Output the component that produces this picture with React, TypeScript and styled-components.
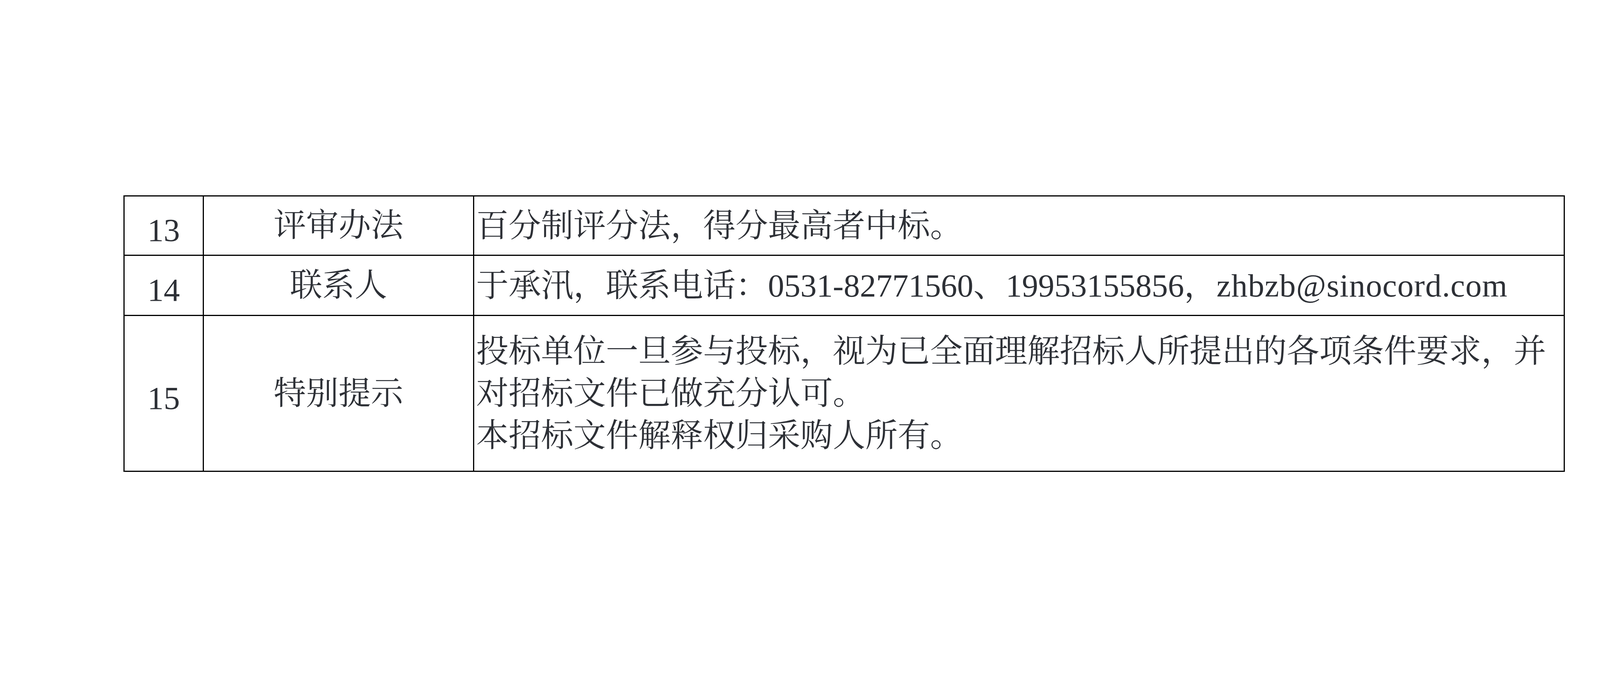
import styled, { createGlobalStyle } from "styled-components";

const GlobalStyle = createGlobalStyle`
  html, body {
    margin: 0;
    padding: 0;
    background: #ffffff;
  }
  body {
    width: 4128px;
    height: 1792px;
    overflow: hidden;
  }
`;

const Page = styled.div`
  width: 4128px;
  height: 1792px;
  padding: 500px 0 0 316px;
  box-sizing: border-box;
  background: #ffffff;
  font-family: "Liberation Serif", "Noto Serif CJK SC", "Noto Sans CJK SC", serif;
  font-size: 83px;
  color: #2d3036;
`;

const Table = styled.div`
  width: 3690px;
  border-left: 3px solid #000;
  border-top: 3px solid #000;
  box-sizing: border-box;
`;

const Row = styled.div<{ $h: number }>`
  display: grid;
  grid-template-columns: 203px 692px 2792px;
  height: ${(p) => p.$h}px;
  border-bottom: 3px solid #000;
  box-sizing: border-box;
`;

const Cell = styled.div<{ $left?: boolean; $num?: boolean }>`
  display: flex;
  align-items: center;
  justify-content: ${(p) => (p.$left ? "flex-start" : "center")};
  padding-left: ${(p) => (p.$left ? "5px" : "0")};
  padding-top: ${(p) => (p.$num ? "24px" : "0")};
  border-right: 3px solid #000;
  box-sizing: border-box;
  white-space: nowrap;
  line-height: 1;
`;

const Lines = styled.div`
  line-height: 108px;
  white-space: nowrap;
`;

const Latin = styled.span`
  letter-spacing: 1.2px;
`;

export default function App() {
  return (
    <>
      <GlobalStyle />
      <Page>
        <Table>
          <Row $h={152}>
            <Cell $num>13</Cell>
            <Cell>评审办法</Cell>
            <Cell $left>
              <Lines>百分制评分法，得分最高者中标。</Lines>
            </Cell>
          </Row>
          <Row $h={154}>
            <Cell $num>14</Cell>
            <Cell>联系人</Cell>
            <Cell $left>
              <Lines>
                于承汛，联系电话：0531-82771560、19953155856，
                <Latin>zhbzb@sinocord.com</Latin>
              </Lines>
            </Cell>
          </Row>
          <Row $h={399}>
            <Cell $num>15</Cell>
            <Cell>特别提示</Cell>
            <Cell $left>
              <Lines>
                <div>投标单位一旦参与投标，视为已全面理解招标人所提出的各项条件要求，并</div>
                <div>对招标文件已做充分认可。</div>
                <div>本招标文件解释权归采购人所有。</div>
              </Lines>
            </Cell>
          </Row>
        </Table>
      </Page>
    </>
  );
}
